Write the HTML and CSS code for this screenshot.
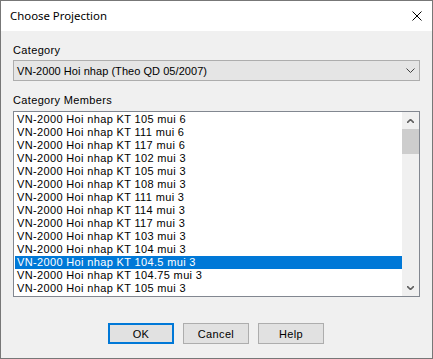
FILE: index.html
```html
<!DOCTYPE html>
<html lang="en">
<head>
    <meta charset="UTF-8">
    <title>Choose Projection</title>
    <link rel="stylesheet" href="styles.css">
</head>
<body>
    <div class="dialog">
        <div class="titlebar">
            <span class="title">Choose Projection</span>
            <svg class="close" width="10" height="10" viewBox="0 0 10 10">
                <path d="M0.5 0.5 L9.5 9.5 M9.5 0.5 L0.5 9.5" stroke="#000" stroke-width="1" fill="none"/>
            </svg>
        </div>
        <div class="content">
            <div class="label first">Category</div>
            <div class="combo">
                <span>VN-2000 Hoi nhap (Theo QD 05/2007)</span>
                <svg class="combo-arrow" width="9" height="5" viewBox="0 0 9 5">
                    <path d="M0.5 0.5 L4.5 4.5 L8.5 0.5" stroke="#404040" stroke-width="1" fill="none"/>
                </svg>
            </div>
            <div class="label second">Category Members</div>
            <div class="listbox">
                <ul class="items">
                    <li>VN-2000 Hoi nhap KT 105 mui 6</li>
                    <li>VN-2000 Hoi nhap KT 111 mui 6</li>
                    <li>VN-2000 Hoi nhap KT 117 mui 6</li>
                    <li>VN-2000 Hoi nhap KT 102 mui 3</li>
                    <li>VN-2000 Hoi nhap KT 105 mui 3</li>
                    <li>VN-2000 Hoi nhap KT 108 mui 3</li>
                    <li>VN-2000 Hoi nhap KT 111 mui 3</li>
                    <li>VN-2000 Hoi nhap KT 114 mui 3</li>
                    <li>VN-2000 Hoi nhap KT 117 mui 3</li>
                    <li>VN-2000 Hoi nhap KT 103 mui 3</li>
                    <li>VN-2000 Hoi nhap KT 104 mui 3</li>
                    <li class="selected">VN-2000 Hoi nhap KT 104.5 mui 3</li>
                    <li>VN-2000 Hoi nhap KT 104.75 mui 3</li>
                    <li>VN-2000 Hoi nhap KT 105 mui 3</li>
                </ul>
                <div class="scrollbar">
                    <div class="sb-btn">
                        <svg width="7" height="4" viewBox="0 0 7 4">
                            <path d="M0 4 L3.5 0.5 L7 4" stroke="#606060" stroke-width="1.6" fill="none"/>
                        </svg>
                    </div>
                    <div class="sb-track">
                        <div class="sb-thumb"></div>
                    </div>
                    <div class="sb-btn">
                        <svg width="7" height="4" viewBox="0 0 7 4">
                            <path d="M0 0 L3.5 3.5 L7 0" stroke="#606060" stroke-width="1.6" fill="none"/>
                        </svg>
                    </div>
                </div>
            </div>
            <div class="buttons">
                <button class="default">OK</button>
                <button>Cancel</button>
                <button>Help</button>
            </div>
        </div>
    </div>
</body>
</html>
```

FILE: styles.css
```css
body {
    margin: 0;
    padding: 0;
    background-color: #f0f0f0;
    font-family: "Liberation Sans", Arial, sans-serif;
    font-size: 11px;
    letter-spacing: 0.35px;
    color: #000;
}
.dialog {
    width: 433px;
    height: 359px;
    box-sizing: border-box;
    border: 1px solid #777;
    background-color: #f0f0f0;
    display: flex;
    flex-direction: column;
}
.titlebar {
    height: 30px;
    background-color: #fff;
    display: flex;
    align-items: center;
    justify-content: space-between;
    padding: 0 10px 0 9px;
}
.title {
    font-family: "Noto Sans", sans-serif;
    font-size: 11.4px;
    letter-spacing: 0;
    margin-top: -1px;
}
.close {
    display: block;
    margin-top: -1px;
}
.content {
    padding: 0 12px;
}
.label {
    line-height: 13px;
    height: 13px;
}
.label.first {
    margin-top: 13px;
}
.label.second {
    margin-top: 13px;
}
.combo {
    margin-top: 3px;
    height: 21px;
    box-sizing: border-box;
    border: 1px solid #adadad;
    background-color: #e5e5e5;
    display: flex;
    align-items: center;
    justify-content: space-between;
    padding: 0 4px 0 3px;
    letter-spacing: 0.05px;
}
.combo-arrow {
    display: block;
}
.listbox {
    margin-top: 4px;
    height: 186px;
    box-sizing: border-box;
    border: 1px solid #828790;
    background-color: #fff;
    display: flex;
}
.items {
    list-style: none;
    margin: 0;
    padding: 1px 0 0 1px;
    flex: 1;
}
.items li {
    height: 13px;
    line-height: 13px;
    padding-left: 2px;
    white-space: nowrap;
}
.items li.selected {
    background-color: #0078d7;
    color: #fff;
}
.scrollbar {
    width: 17px;
    background-color: #f0f0f0;
    display: flex;
    flex-direction: column;
}
.sb-btn {
    height: 17px;
    display: flex;
    align-items: center;
    justify-content: center;
}
.sb-btn svg {
    display: block;
}
.sb-track {
    flex: 1;
}
.sb-thumb {
    height: 25px;
    background-color: #cdcdcd;
}
.buttons {
    margin-top: 26px;
    display: flex;
    justify-content: center;
    gap: 9px;
    padding-right: 1px;
}
.buttons button {
    width: 66px;
    height: 21px;
    box-sizing: border-box;
    border: 1px solid #adadad;
    background-color: #e1e1e1;
    font-family: "Liberation Sans", Arial, sans-serif;
    font-size: 11px;
    letter-spacing: 0.35px;
    color: #000;
    padding: 0;
}
.buttons button.default {
    border: 2px solid #0078d7;
}
```
